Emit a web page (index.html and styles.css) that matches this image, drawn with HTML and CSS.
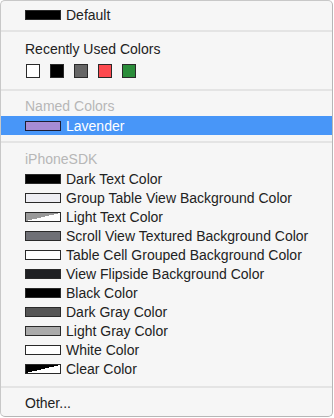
FILE: index.html
```html
<!DOCTYPE html>
<html lang="en-US">
<head>
  <meta charset="UTF-8">
  <title>Colors</title>
  <link rel="stylesheet" href="styles.css">
</head>
<body>
  <div class="menu">
    <div class="item first"><span class="swatch black"></span>Default</div>
    <div class="sep"></div>

    <div class="header dark">Recently Used Colors</div>
    <div class="recent">
      <span class="chip white"></span>
      <span class="chip black"></span>
      <span class="chip gray"></span>
      <span class="chip red"></span>
      <span class="chip green"></span>
    </div>
    <div class="sep after-recent"></div>

    <div class="header">Named Colors</div>
    <div class="item selected"><span class="swatch lavender"></span>Lavender</div>
    <div class="sep"></div>

    <div class="header sdk">iPhoneSDK</div>
    <div class="list">
      <div class="item"><span class="swatch black"></span>Dark Text Color</div>
      <div class="item"><span class="swatch group"></span>Group Table View Background Color</div>
      <div class="item"><span class="swatch light-text"></span>Light Text Color</div>
      <div class="item"><span class="swatch scroll"></span>Scroll View Textured Background Color</div>
      <div class="item"><span class="swatch white"></span>Table Cell Grouped Background Color</div>
      <div class="item"><span class="swatch flipside"></span>View Flipside Background Color</div>
      <div class="item"><span class="swatch black"></span>Black Color</div>
      <div class="item"><span class="swatch dark-gray"></span>Dark Gray Color</div>
      <div class="item"><span class="swatch light-gray"></span>Light Gray Color</div>
      <div class="item"><span class="swatch white"></span>White Color</div>
      <div class="item"><span class="swatch clear"></span>Clear Color</div>
    </div>
    <div class="sep before-other"></div>

    <div class="other">Other...</div>
  </div>
</body>
</html>
```

FILE: styles.css
```css
body {
  margin: 0;
  padding: 0;
  background: #fff;
  font-family: "Liberation Sans", Arial, sans-serif;
  font-size: 14px;
  color: #222;
}

.menu {
  box-sizing: border-box;
  width: 333px;
  height: 417px;
  padding-top: 4px;
  background: #f6f6f6;
  border: 1px solid #c8c8c8;
  border-right-color: #b6b6b6;
  border-bottom-color: #b6b6b6;
  border-radius: 5px;
  overflow: hidden;
}

/* rows */

.item {
  display: flex;
  align-items: center;
  gap: 5px;
  height: 19px;
  padding-left: 24px;
  white-space: nowrap;
}
.list .item {
  height: 19.1px;
}
.item.selected {
  background: #4896f8;
  color: #fff;
}

.header {
  height: 19px;
  line-height: 19px;
  padding-left: 24px;
  color: #b7b7b7;
  margin-top: 6px;
}
.header.dark {
  color: #222;
  margin-top: 8px;
}
.header.sdk {
  margin-top: 7px;
}

.other {
  height: 19px;
  line-height: 19px;
  padding-left: 24px;
  margin-top: 6px;
}

.sep {
  height: 2px;
  background: #e4e4e4;
  margin-top: 6px;
}
.sep.after-recent {
  margin-top: 11px;
}
.sep.before-other {
  margin-top: 7px;
}

/* swatches */

.swatch {
  box-sizing: border-box;
  flex: none;
  width: 36px;
  height: 10px;
  border: 1px solid #2a2a2a;
}

.recent {
  display: flex;
  gap: 10px;
  padding-left: 25px;
  margin-top: 5px;
}
.chip {
  box-sizing: border-box;
  width: 14px;
  height: 14px;
  border: 1px solid #2a2a2a;
}

.black { background: #000; }
.white { background: #fff; }
.gray { background: #666; }
.red { background: #fd4a4f; }
.green { background: #2b8d3a; }
.lavender { background: #a78cd4; border-color: #1d1d33; }
.group { background: #eeeef3; }
.scroll { background: #6f7076; }
.flipside { background: #1f2023; }
.dark-gray { background: #555; }
.light-gray { background: #aaa; }
.light-text { background: linear-gradient(to bottom right, #999 50%, #fff 50%); }
.clear { background: linear-gradient(to bottom right, #000 50%, #fff 50%); }
```
